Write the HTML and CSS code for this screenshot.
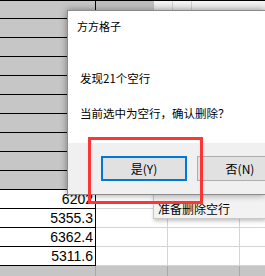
FILE: index.html
```html
<!DOCTYPE html>
<html lang="zh-CN">
<head>
  <meta charset="UTF-8" />
  <title>方方格子 - 删除空行</title>
  <link rel="stylesheet" href="styles.css">
</head>
<body>

<div class="sheet">
  <div class="row top">
    <div class="cell key"></div>
    <div class="strip dark"></div>
    <div class="strip"></div>
    <div class="strip"></div>
    <div class="strip wide"></div>
  </div>
  <div class="row gray"><div class="cell key"></div><div class="cell"></div></div>
  <div class="row gray"><div class="cell key"></div><div class="cell"></div></div>
  <div class="row gray"><div class="cell key"></div><div class="cell"></div></div>
  <div class="row gray"><div class="cell key"></div><div class="cell"></div></div>
  <div class="row gray"><div class="cell key"></div><div class="cell"></div></div>
  <div class="row gray"><div class="cell key"></div><div class="cell"></div></div>
  <div class="row gray"><div class="cell key"></div><div class="cell"></div></div>
  <div class="row gray"><div class="cell key"></div><div class="cell"></div></div>
  <div class="row gray"><div class="cell key"></div><div class="cell"></div></div>
  <div class="row"><div class="cell key">6202</div><div class="cell"></div><div class="cell"></div><div class="cell last"></div></div>
  <div class="row"><div class="cell key">5355.3</div><div class="cell"></div><div class="cell"></div><div class="cell last"></div></div>
  <div class="row"><div class="cell key">6362.4</div><div class="cell"></div><div class="cell"></div><div class="cell last"></div></div>
  <div class="row"><div class="cell key">5311.6</div><div class="cell"></div><div class="cell"></div><div class="cell last"></div></div>
  <div class="row gray bottom"><div class="cell key"></div><div class="cell"></div><div class="cell"></div><div class="cell last"></div></div>
</div>

<div class="status-tip">准备删除空行</div>

<div class="dialog">
  <div class="dialog-body">
    <div class="dialog-title">方方格子</div>
    <p class="msg first">发现21个空行</p>
    <p class="msg">当前选中为空行，确认删除？</p>
  </div>
  <div class="dialog-footer">
    <button class="btn primary">是(Y)</button>
    <button class="btn">否(N)</button>
  </div>
</div>

<div class="highlight"></div>

</body>
</html>
```

FILE: styles.css
```css
body {
  margin: 0;
  width: 265px;
  height: 276px;
  overflow: hidden;
  position: relative;
  background: #fff;
  font-family: "Noto Sans CJK SC", "Liberation Sans", sans-serif;
  color: #000;
}

/* spreadsheet behind the dialog */
.sheet {
  border-top: 1px solid #000;
}

.row {
  display: flex;
  height: 19px;
}

.row .cell {
  box-sizing: border-box;
  width: 72px;
  height: 19px;
  border-right: 1px solid #d4d4d4;
  border-bottom: 1px solid #d4d4d4;
  flex-shrink: 0;
}

.row .cell.last {
  width: 25px;
  border-right: none;
}

.row .cell.key {
  width: 96px;
  border-right: 1px solid #000;
  border-bottom: 1px solid #000;
  font-family: "Liberation Sans", Arial, sans-serif;
  font-size: 14px;
  line-height: 18px;
  text-align: right;
  padding-right: 2px;
}

.row.gray .cell.key,
.row.top .cell.key {
  background: #c6c6c6;
}

.row.gray .cell {
  background: #c6c6c6;
}

.row.bottom .cell {
  border-right-color: #a8a8a8;
}

.row.top {
  height: 18px;
}

.row.top .cell.key {
  height: 18px;
}

.strip {
  width: 19px;
  height: 18px;
  box-sizing: border-box;
  border-right: 1px solid #cfcfcf;
  background: linear-gradient(#f4f4f4, #e2e2e2);
  flex-shrink: 0;
}

.strip.dark {
  width: 58px;
  border-right: 1px solid #bdbdbd;
  background: linear-gradient(#bcbcbc, #d6d6d6);
}

.strip.wide {
  flex: 1;
  border-right: none;
}

/* tooltip under the dialog */
.status-tip {
  position: absolute;
  left: 153px;
  top: 192px;
  width: 112px;
  height: 27px;
  box-sizing: border-box;
  padding: 9px 0 0 4px;
  background: #f2f2f2;
  border: 1px solid #c8c8c8;
  border-right: none;
  box-shadow: 1px 2px 4px rgba(0, 0, 0, 0.25);
  font-size: 12px;
  line-height: 14px;
  color: #000;
}

/* message box */
.dialog {
  position: absolute;
  left: 67px;
  top: 10px;
  width: 198px;
  height: 185px;
  box-sizing: border-box;
  border: 1px solid #8c8c8c;
  border-right: none;
  background: #f0f0f0;
  box-shadow: 0 0 7px rgba(0, 0, 0, 0.4);
  display: flex;
  flex-direction: column;
  overflow: hidden;
}

.dialog-body {
  background: #fff;
  height: 132px;
  padding: 0 0 0 9px;
  flex-shrink: 0;
}

.dialog-title {
  font-size: 11px;
  line-height: 12px;
  margin-top: 9px;
}

.msg {
  margin: 0;
  font-size: 11.5px;
  line-height: 14px;
  padding-left: 3px;
  white-space: nowrap;
}

.msg.first {
  margin-top: 39px;
}

.msg + .msg {
  margin-top: 21px;
}

.dialog-footer {
  display: flex;
  gap: 10px;
  padding: 13px 0 0 33px;
}

.btn {
  width: 86px;
  height: 25px;
  box-sizing: border-box;
  background: #e1e1e1;
  border: 1px solid #adadad;
  font-family: "Noto Sans CJK SC", "Liberation Sans", sans-serif;
  font-size: 12px;
  color: #000;
  padding: 0;
  flex-shrink: 0;
}

.btn.primary {
  border: 2px solid #0078d7;
}

/* red annotation frame */
.highlight {
  position: absolute;
  left: 88px;
  top: 137px;
  width: 109px;
  height: 61px;
  border: 3px solid #ff3434;
}
```
